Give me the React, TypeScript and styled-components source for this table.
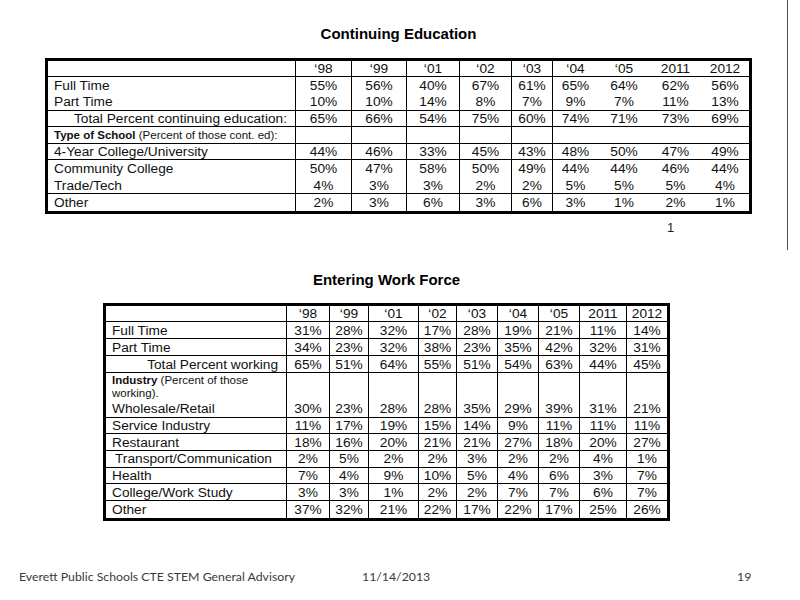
import React from "react";
import styled, { createGlobalStyle } from "styled-components";

const GlobalStyle = createGlobalStyle`
  html, body { margin: 0; padding: 0; background: #fff; }
  body {
    width: 800px;
    height: 600px;
    overflow: hidden;
    font-family: "Liberation Sans", Arial, sans-serif;
    color: #000;
  }
`;

const Slide = styled.div`
  width: 800px;
  height: 600px;
  display: flex;
  flex-direction: column;
  background: #fff;
`;

const TopBlock = styled.section`
  box-sizing: border-box;
  width: 788px;
  height: 250px;
  border-right: 1px solid #4a4a4a;
  padding: 25px 0 0 45px;
`;

const BottomBlock = styled.section`
  padding: 21px 0 0 103px;
`;

const TableBlock = styled.div<{ $width: number }>`
  width: ${(p) => p.$width}px;
  display: flex;
  flex-direction: column;
`;

const Title = styled.h2<{ $gap: number }>`
  margin: 0 0 ${(p) => p.$gap}px 0;
  font-size: 15px;
  line-height: 18px;
  font-weight: bold;
  text-align: center;
  color: #000;
`;

const DataTable = styled.table<{ $seps: number }>`
  box-sizing: border-box;
  width: 100%;
  table-layout: fixed;
  border-collapse: separate;
  border-spacing: 0;
  border: 3px solid #000;
  font-size: 13.7px;
  color: #111;

  td {
    box-sizing: border-box;
    padding: 0;
    text-align: center;
    vertical-align: middle;
    white-space: nowrap;
    line-height: 15px;
  }
  td:nth-child(-n + ${(p) => p.$seps}) {
    border-right: 1px solid #000;
  }
`;

const Row = styled.tr<{ $line: boolean; $h: number }>`
  & > td {
    height: ${(p) => p.$h}px;
    border-bottom: ${(p) => (p.$line ? "1px solid #000" : "none")};
  }
`;

const LabelCell = styled.td<{ $right?: boolean; $indent?: number }>`
  && {
    text-align: ${(p) => (p.$right ? "right" : "left")};
    padding: 0 ${(p) => (p.$right ? 8 : 0)}px 0 ${(p) => 6 + (p.$indent || 0)}px;
  }
`;

const SmallLabel = styled.td`
  && {
    text-align: left;
    padding: 0 4px 0 6px;
    font-size: 11.5px;
    line-height: 13px;
    white-space: normal;
  }
`;

const Strong = styled.b`
  font-weight: bold;
`;

const PageMark = styled.div`
  margin: 6px 0 0 622px;
  font-size: 13px;
  line-height: 15px;
  color: #222;
`;

const Footer = styled.footer`
  margin-top: auto;
  display: grid;
  grid-template-columns: 343px 375px auto;
  padding: 0 0 16px 19px;
  font-family: Lato, "Open Sans", sans-serif;
  font-size: 12.3px;
  line-height: 15px;
  color: #3a3a3a;
`;

type DataRow = {
  label: string;
  values: string[];
  line: boolean;
  right?: boolean;
  indent?: number;
};

const years = ["\u201898", "\u201899", "\u201801", "\u201802", "\u201803", "\u201804", "\u201805", "2011", "2012"];

const pct = (s: string) => s.split(" ").map((v) => v + "%");

const eduTop: DataRow[] = [
  { label: "Full Time", values: pct("55 56 40 67 61 65 64 62 56"), line: false },
  { label: "Part Time", values: pct("10 10 14 8 7 9 7 11 13"), line: true },
  { label: "Total Percent continuing education:", values: pct("65 66 54 75 60 74 71 73 69"), line: true, right: true },
];

const eduBottom: DataRow[] = [
  { label: "4-Year College/University", values: pct("44 46 33 45 43 48 50 47 49"), line: true },
  { label: "Community College", values: pct("50 47 58 50 49 44 44 46 44"), line: false },
  { label: "Trade/Tech", values: pct("4 3 3 2 2 5 5 5 4"), line: true },
  { label: "Other", values: pct("2 3 6 3 6 3 1 2 1"), line: false },
];

const workTop: DataRow[] = [
  { label: "Full Time", values: pct("31 28 32 17 28 19 21 11 14"), line: true },
  { label: "Part Time", values: pct("34 23 32 38 23 35 42 32 31"), line: true },
  { label: "Total Percent working", values: pct("65 51 64 55 51 54 63 44 45"), line: true, right: true },
];

const workBottom: DataRow[] = [
  { label: "Wholesale/Retail", values: pct("30 23 28 28 35 29 39 31 21"), line: true },
  { label: "Service Industry", values: pct("11 17 19 15 14 9 11 11 11"), line: true },
  { label: "Restaurant", values: pct("18 16 20 21 21 27 18 20 27"), line: true },
  { label: "Transport/Communication", values: pct("2 5 2 2 3 2 2 4 1"), line: true, indent: 3 },
  { label: "Health", values: pct("7 4 9 10 5 4 6 3 7"), line: true },
  { label: "College/Work Study", values: pct("3 3 1 2 2 7 7 6 7"), line: true },
  { label: "Other", values: pct("37 32 21 22 17 22 17 25 26"), line: false },
];

const Cols = ({ widths }: { widths: number[] }) => (
  <colgroup>
    {widths.map((w, i) => (
      <col key={i} style={{ width: w }} />
    ))}
  </colgroup>
);

const DataRows = ({ rows, h }: { rows: DataRow[]; h: number }) => (
  <>
    {rows.map((r) => (
      <Row key={r.label} $line={r.line} $h={h}>
        <LabelCell $right={r.right} $indent={r.indent}>
          {r.label}
        </LabelCell>
        {r.values.map((v, i) => (
          <td key={i}>{v}</td>
        ))}
      </Row>
    ))}
  </>
);

const Blanks = () => (
  <>
    {years.map((y) => (
      <td key={y} />
    ))}
  </>
);

const Header = ({ h }: { h: number }) => (
  <Row $line $h={h}>
    <td />
    {years.map((y) => (
      <td key={y}>{y}</td>
    ))}
  </Row>
);

export default function App() {
  return (
    <Slide>
      <GlobalStyle />
      <TopBlock>
        <TableBlock $width={707}>
          <Title $gap={15}>Continuing Education</Title>
          <DataTable $seps={6}>
            <Cols widths={[248, 56, 55, 53, 52, 41, 45, 52, 51, 48]} />
            <tbody>
              <Header h={15.5} />
              <DataRows rows={eduTop} h={16.8} />
              <Row $line $h={16.3}>
                <SmallLabel>
                  <Strong>Type of School</Strong> (Percent of those cont. ed):
                </SmallLabel>
                <Blanks />
              </Row>
              <DataRows rows={eduBottom} h={16.8} />
            </tbody>
          </DataTable>
          <PageMark>1</PageMark>
        </TableBlock>
      </TopBlock>
      <BottomBlock>
        <TableBlock $width={567}>
          <Title $gap={14}>Entering Work Force</Title>
          <DataTable $seps={9}>
            <Cols widths={[181, 43, 39, 50, 38, 41, 41, 41, 47, 40]} />
            <tbody>
              <Header h={15.5} />
              <DataRows rows={workTop} h={17} />
              <Row $line={false} $h={28}>
                <SmallLabel>
                  <Strong>Industry</Strong> (Percent of those
                  <br />
                  working).
                </SmallLabel>
                <Blanks />
              </Row>
              <DataRows rows={workBottom} h={16.7} />
            </tbody>
          </DataTable>
        </TableBlock>
      </BottomBlock>
      <Footer>
        <span>Everett Public Schools CTE STEM General Advisory</span>
        <span>11/14/2013</span>
        <span>19</span>
      </Footer>
    </Slide>
  );
}
